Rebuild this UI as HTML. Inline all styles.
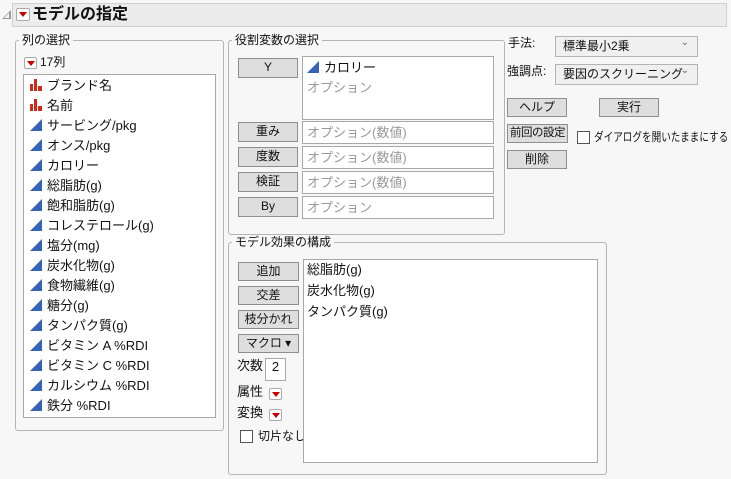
<!DOCTYPE html>
<html><head><meta charset="utf-8"><style>
*{box-sizing:border-box;margin:0;padding:0;white-space:nowrap}
body{width:731px;height:479px;background:#f7f7f7;font-family:"Liberation Sans","Noto Sans CJK JP",sans-serif;font-size:13px;color:#111;position:relative;overflow:hidden}
.a{position:absolute}
.hdr{left:12px;top:3px;width:715px;height:24px;background:#ececec;border:1px solid #cfcfcf}
.grp{border:1px solid #b4b4b4;border-radius:3px}
.lbl{background:#f7f7f7;padding:0 3px;line-height:14px;font-size:12px}
.box{background:#fff;border:1px solid #a8a8a8}
.btn{background:#dedede;border:1px solid #8e8e8e;text-align:center;line-height:17px;font-size:12px;overflow:hidden}
.ph{color:#999}
.rb{width:13px;height:12px;border:1px solid #aaa;background:#fff;border-radius:2px}
.rb::after{content:"";position:absolute;left:2px;top:3px;border-left:4px solid transparent;border-right:4px solid transparent;border-top:5px solid #c00}
.it{position:absolute;left:6px;height:20px;line-height:20px}
.it svg{vertical-align:-1px;margin-right:4px}
.dd{background:#f0f0f0;border:1px solid #b4b4b4;line-height:19px;padding-left:7px;font-size:12px}
.dd::after{content:"⌄";position:absolute;right:8px;top:-4px;font-size:10px;color:#666}
.cb{width:13px;height:13px;border:1px solid #555;background:#fff}
</style></head><body>
<div class="a" style="left:2px;top:10px;width:0;height:0;border-left:9px solid transparent;border-bottom:9px solid #999"></div>
<div class="a" style="left:4px;top:13px;width:0;height:0;border-left:5px solid transparent;border-bottom:5px solid #f7f7f7"></div>
<div class="a hdr"></div>
<div class="a rb" style="left:16px;top:8px;width:14px;height:13px"></div>
<div class="a" style="left:32px;top:5px;font-size:16px;font-weight:bold;line-height:20px">モデルの指定</div>

<div class="a grp" style="left:15px;top:40px;width:209px;height:391px"></div>
<div class="a lbl" style="left:19px;top:33px">列の選択</div>
<div class="a rb" style="left:24px;top:57px"></div>
<div class="a" style="left:40px;top:55px;line-height:15px;font-size:12px">17列</div>
<div class="a box" style="left:23px;top:74px;width:193px;height:344px">
<div class="it" style="top:1px"><svg width="13" height="12"><rect x="0" y="5" width="3" height="7" fill="#d0281a"/><rect x="4" y="0" width="3" height="12" fill="#d0281a"/><rect x="8" y="7" width="4" height="5" fill="#d0281a"/></svg>ブランド名</div>
<div class="it" style="top:21px"><svg width="13" height="12"><rect x="0" y="5" width="3" height="7" fill="#d0281a"/><rect x="4" y="0" width="3" height="12" fill="#d0281a"/><rect x="8" y="7" width="4" height="5" fill="#d0281a"/></svg>名前</div>
<div class="it" style="top:41px"><svg width="13" height="12"><polygon points="0,12 12,0 12,12" fill="#3563b8"/></svg>サービング/pkg</div>
<div class="it" style="top:61px"><svg width="13" height="12"><polygon points="0,12 12,0 12,12" fill="#3563b8"/></svg>オンス/pkg</div>
<div class="it" style="top:81px"><svg width="13" height="12"><polygon points="0,12 12,0 12,12" fill="#3563b8"/></svg>カロリー</div>
<div class="it" style="top:101px"><svg width="13" height="12"><polygon points="0,12 12,0 12,12" fill="#3563b8"/></svg>総脂肪(g)</div>
<div class="it" style="top:121px"><svg width="13" height="12"><polygon points="0,12 12,0 12,12" fill="#3563b8"/></svg>飽和脂肪(g)</div>
<div class="it" style="top:141px"><svg width="13" height="12"><polygon points="0,12 12,0 12,12" fill="#3563b8"/></svg>コレステロール(g)</div>
<div class="it" style="top:161px"><svg width="13" height="12"><polygon points="0,12 12,0 12,12" fill="#3563b8"/></svg>塩分(mg)</div>
<div class="it" style="top:181px"><svg width="13" height="12"><polygon points="0,12 12,0 12,12" fill="#3563b8"/></svg>炭水化物(g)</div>
<div class="it" style="top:201px"><svg width="13" height="12"><polygon points="0,12 12,0 12,12" fill="#3563b8"/></svg>食物繊維(g)</div>
<div class="it" style="top:221px"><svg width="13" height="12"><polygon points="0,12 12,0 12,12" fill="#3563b8"/></svg>糖分(g)</div>
<div class="it" style="top:241px"><svg width="13" height="12"><polygon points="0,12 12,0 12,12" fill="#3563b8"/></svg>タンパク質(g)</div>
<div class="it" style="top:261px"><svg width="13" height="12"><polygon points="0,12 12,0 12,12" fill="#3563b8"/></svg>ビタミン A %RDI</div>
<div class="it" style="top:281px"><svg width="13" height="12"><polygon points="0,12 12,0 12,12" fill="#3563b8"/></svg>ビタミン C %RDI</div>
<div class="it" style="top:301px"><svg width="13" height="12"><polygon points="0,12 12,0 12,12" fill="#3563b8"/></svg>カルシウム %RDI</div>
<div class="it" style="top:321px"><svg width="13" height="12"><polygon points="0,12 12,0 12,12" fill="#3563b8"/></svg>鉄分 %RDI</div>
</div>

<div class="a grp" style="left:228px;top:40px;width:277px;height:195px"></div>
<div class="a lbl" style="left:232px;top:33px">役割変数の選択</div>
<div class="a btn" style="left:238px;top:58px;width:60px;height:20px">Y</div>
<div class="a box" style="left:302px;top:56px;width:192px;height:64px"><div class="it" style="top:1px;left:4px"><svg width="13" height="12"><polygon points="0,12 12,0 12,12" fill="#3563b8"/></svg>カロリー</div><div class="it ph" style="top:21px;left:4px">オプション</div></div>
<div class="a btn" style="left:238px;top:122px;width:60px;height:20px">重み</div>
<div class="a box ph" style="left:302px;top:121px;width:192px;height:23px;padding-left:4px;line-height:21px">オプション(数値)</div>
<div class="a btn" style="left:238px;top:147px;width:60px;height:20px">度数</div>
<div class="a box ph" style="left:302px;top:146px;width:192px;height:23px;padding-left:4px;line-height:21px">オプション(数値)</div>
<div class="a btn" style="left:238px;top:172px;width:60px;height:20px">検証</div>
<div class="a box ph" style="left:302px;top:171px;width:192px;height:23px;padding-left:4px;line-height:21px">オプション(数値)</div>
<div class="a btn" style="left:238px;top:197px;width:60px;height:20px">By</div>
<div class="a box ph" style="left:302px;top:196px;width:192px;height:23px;padding-left:4px;line-height:21px">オプション</div>

<div class="a" style="left:508px;top:35px;line-height:16px;font-size:12px">手法:</div>
<div class="a dd" style="left:555px;top:36px;width:143px;height:21px">標準最小2乗</div>
<div class="a" style="left:507px;top:63px;line-height:16px;font-size:12px">強調点:</div>
<div class="a dd" style="left:555px;top:64px;width:143px;height:21px">要因のスクリーニング</div>
<div class="a btn" style="left:507px;top:98px;width:60px;height:19px">ヘルプ</div>
<div class="a btn" style="left:599px;top:98px;width:60px;height:19px">実行</div>
<div class="a btn" style="left:507px;top:124px;width:61px;height:19px;font-size:11.5px;letter-spacing:-0.5px">前回の設定</div>
<div class="a cb" style="left:577px;top:131px"></div>
<div class="a" style="left:594px;top:129px;line-height:16px;font-size:12px;transform:scaleX(0.8);transform-origin:0 0">ダイアログを開いたままにする</div>
<div class="a btn" style="left:507px;top:150px;width:60px;height:19px">削除</div>

<div class="a grp" style="left:228px;top:242px;width:379px;height:233px"></div>
<div class="a lbl" style="left:232px;top:235px">モデル効果の構成</div>
<div class="a btn" style="left:238px;top:262px;width:61px;height:19px">追加</div>
<div class="a btn" style="left:238px;top:286px;width:61px;height:19px">交差</div>
<div class="a btn" style="left:238px;top:310px;width:61px;height:19px">枝分かれ</div>
<div class="a btn" style="left:238px;top:334px;width:61px;height:19px">マクロ ▾</div>
<div class="a" style="left:237px;top:358px;line-height:16px">次数</div>
<div class="a box" style="left:265px;top:358px;width:21px;height:23px;text-align:center;line-height:16px">2</div>
<div class="a" style="left:237px;top:384px;line-height:16px">属性</div>
<div class="a rb" style="left:269px;top:388px"></div>
<div class="a" style="left:237px;top:405px;line-height:16px">変換</div>
<div class="a rb" style="left:269px;top:409px"></div>
<div class="a cb" style="left:240px;top:430px"></div>
<div class="a" style="left:258px;top:428px;line-height:16px;font-size:12px">切片なし</div>
<div class="a box" style="left:303px;top:259px;width:295px;height:204px">
<div class="it" style="top:0;left:3px">総脂肪(g)</div>
<div class="it" style="top:21px;left:3px">炭水化物(g)</div>
<div class="it" style="top:42px;left:3px">タンパク質(g)</div>
</div>
</body></html>
